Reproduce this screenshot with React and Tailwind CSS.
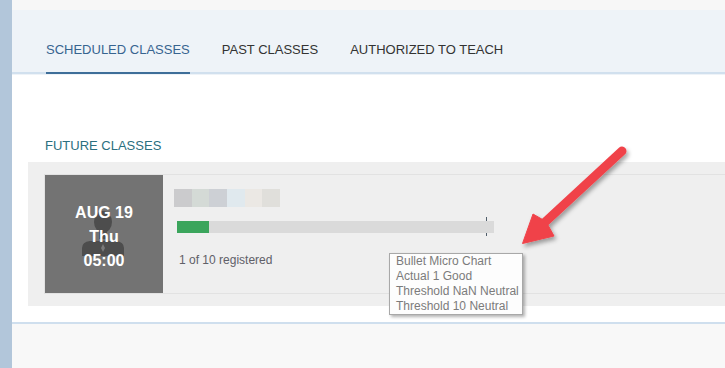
import React from "react";

const tabs = [
    { label: "SCHEDULED CLASSES", active: true },
    { label: "PAST CLASSES", active: false },
    { label: "AUTHORIZED TO TEACH", active: false },
];

// blurred-out class title
const blurBlocks = [
    { w: "w-[18px]", c: "bg-[#cbcbcd]" },
    { w: "w-[17px]", c: "bg-[#d4dad6]" },
    { w: "w-[18px]", c: "bg-[#cdd0d5]" },
    { w: "w-[18px]", c: "bg-[#e0e9ee]" },
    { w: "w-[17px]", c: "bg-[#ebe8e4]" },
    { w: "w-[18px]", c: "bg-[#e0dfdb]" },
];

const tooltipLines = [
    "Bullet Micro Chart",
    "Actual 1 Good",
    "Threshold NaN Neutral",
    "Threshold 10 Neutral",
];

const PersonIcon = () => (
    <svg width="50" height="50" viewBox="0 0 50 50" className="absolute left-[33px] top-[33px]">
        <ellipse cx="25" cy="14" rx="9" ry="11" fill="#4d4d4d" />
        <rect x="21" y="23" width="8" height="8" fill="#4d4d4d" />
        <path d="M4 48 L4 40 Q4 34 12 33 L38 33 Q46 34 46 40 L46 48 Z" fill="#4d4d4d" />
        <path d="M25 36 L27 40 L25 44 L23 40 Z" fill="#7a7a7a" />
    </svg>
);

const ClassCard = () => (
    <div className="flex h-[120px] border-y border-l border-[#e2e2e2]">
        <div className="relative w-[118px] shrink-0 bg-[#737373] flex flex-col items-center justify-center pt-[5px]">
            <PersonIcon />
            <div className="relative text-white font-bold text-[16px] leading-6 text-center">
                <div>AUG 19</div>
                <div>Thu</div>
                <div>05:00</div>
            </div>
        </div>
        <div className="flex flex-col pl-[11px] pt-[14px]">
            <div className="flex h-[18px]">
                {blurBlocks.map((b, i) => (
                    <div key={i} className={`${b.w} ${b.c} h-full`} />
                ))}
            </div>
            <div className="relative ml-[3px] mt-[14px] w-[317px] h-[12px] bg-[#dadada]">
                <div className="h-full w-[32px] bg-[#3ba55c]" />
                <div className="absolute left-[309px] top-[-4px] h-[4px] w-px bg-[#4f5d6a]" />
                <div className="absolute left-[309px] bottom-[-3px] h-[3px] w-px bg-[#4f5d6a]" />
            </div>
            <div className="ml-[5px] mt-[19px] text-[12px] leading-4 text-[#5f6068]">
                1 of 10 registered
            </div>
        </div>
    </div>
);

const Arrow = () => (
    <svg width="725" height="368" viewBox="0 0 725 368" className="absolute inset-0 pointer-events-none">
        <defs>
            <filter id="arrowShadow" x="-20%" y="-20%" width="140%" height="140%">
                <feDropShadow dx="2" dy="3" stdDeviation="2" floodColor="#000" floodOpacity="0.35" />
            </filter>
        </defs>
        <g filter="url(#arrowShadow)" fill="#f0434a" stroke="#f0434a">
            <line x1="622" y1="151" x2="543" y2="224" strokeWidth="9" strokeLinecap="round" />
            <path d="M522.5 243.5 L533 214 L546 221.5 L554 236 Z" strokeWidth="1" strokeLinejoin="round" />
        </g>
    </svg>
);

export default function App() {
    return (
        <div className="relative flex w-[725px] h-[368px] overflow-hidden bg-white font-['Liberation_Sans',sans-serif]">
            <div className="w-[12px] shrink-0 bg-[#b2c6da]" />
            <div className="flex-1 flex flex-col">
                <div className="h-[10px] bg-[#f7f7f7]" />
                <div className="h-[65px] bg-[#eef3f8] flex flex-col justify-end pb-px">
                    <div className="flex gap-8 pl-[34px] border-b-2 border-[#d1e0ee]">
                        {tabs.map((t) => (
                            <div
                                key={t.label}
                                className={`-mb-[2px] pb-[14px] border-b-2 text-[13px] leading-4 ${
                                    t.active ? "border-[#3e6e99] text-[#376490]" : "border-transparent text-[#333333]"
                                }`}
                            >
                                {t.label}
                            </div>
                        ))}
                    </div>
                </div>

                <div className="pt-[63px] pl-[16px]">
                    <h2 className="pl-[17px] mb-2 text-[13px] leading-4 text-[#2b6f80]">FUTURE CLASSES</h2>
                    <div className="bg-[#efefef] py-3 pl-4">
                        <ClassCard />
                    </div>
                </div>

                <div className="mt-[16px] flex-1 border-t-2 border-[#cfdfee] bg-[#f8f8f8]" />
            </div>

            <div className="absolute left-[389px] top-[253px] w-[134px] border border-[#a8a8a8] bg-[#fdfdfd] px-[6px] shadow-[2px_2px_3px_rgba(0,0,0,0.3)]">
                {tooltipLines.map((l) => (
                    <div key={l} className="text-[12px] leading-[15px] text-[#7b7b7b] whitespace-nowrap">
                        {l}
                    </div>
                ))}
            </div>

            <Arrow />
        </div>
    );
}
